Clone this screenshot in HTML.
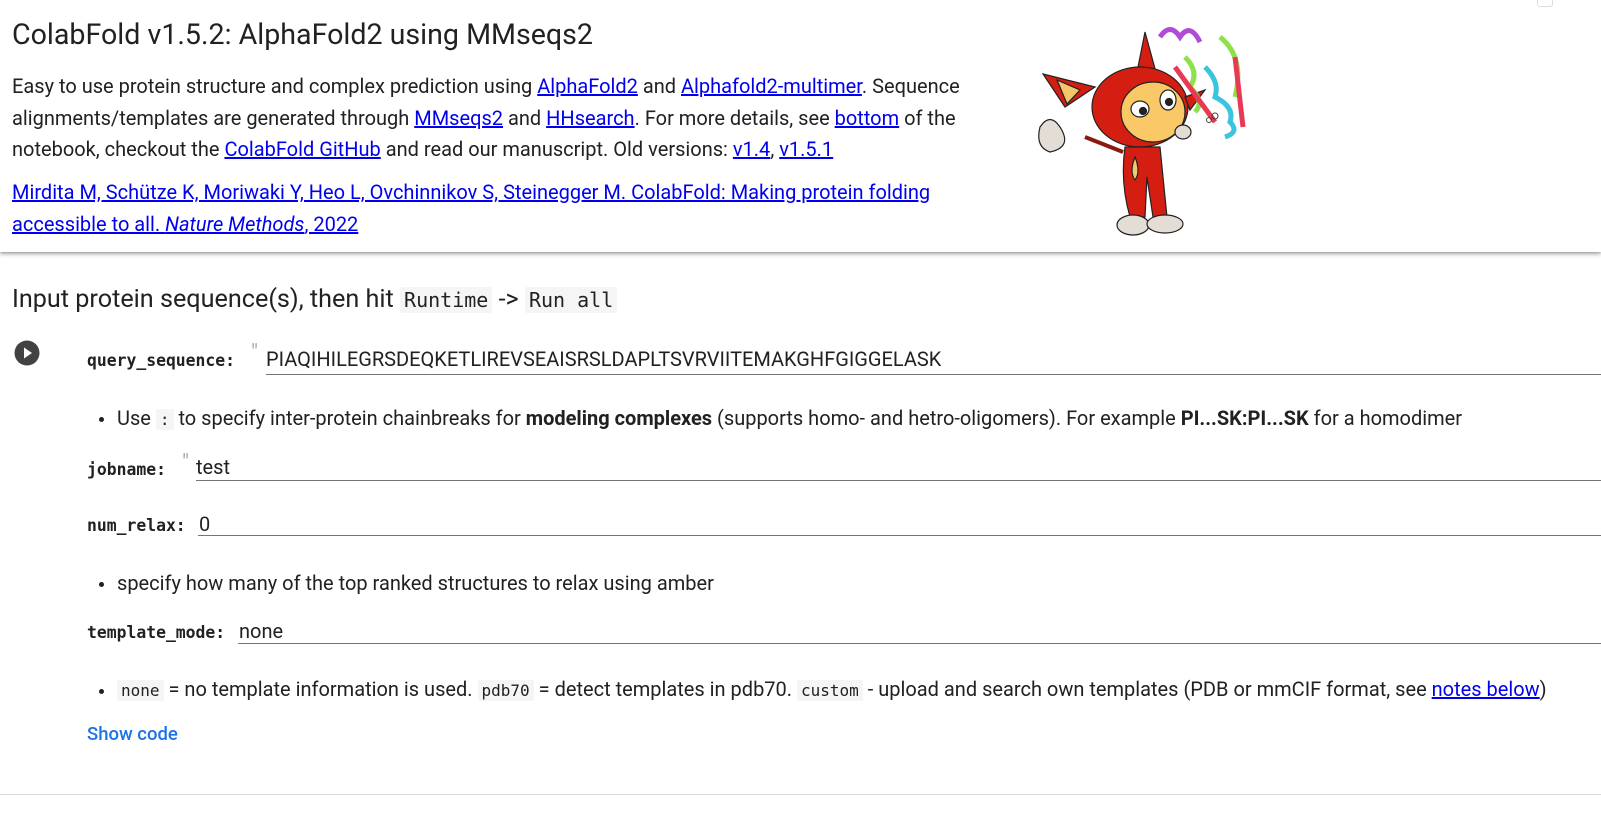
<!DOCTYPE html>
<html><head><meta charset="utf-8"><style>
*{margin:0;padding:0;box-sizing:border-box}
body{width:1601px;height:813px;background:#fff;font-family:"Roboto","Liberation Sans",sans-serif;color:#212121;position:relative;overflow:hidden}
.a{position:absolute;white-space:nowrap}
.card{position:absolute;left:0;top:0;width:1601px;height:252px;background:#fff;box-shadow:0 2px 4px rgba(0,0,0,.35),0 0 2px rgba(0,0,0,.2)}
a{color:#0000ee;text-decoration:underline}
.t{font-size:20px;line-height:31.5px}
.lbl{font-family:"DejaVu Sans Mono","Liberation Mono",monospace;font-weight:bold;font-size:16.4px;color:#212121}
.ul{position:absolute;height:1px;background:#757575;right:0}
code{font-family:"DejaVu Sans Mono","Liberation Mono",monospace;background:#f5f5f5;padding:1px 4px;font-size:16px;border-radius:2px}
.dot{position:absolute;width:5px;height:5px;border-radius:50%;background:#212121}
.q{position:absolute;color:#aaa;font-size:22px}
</style></head><body>
<div class="card">
<div class="a" style="left:12px;top:17px;font-size:28.6px;">ColabFold v1.5.2: AlphaFold2 using MMseqs2</div>
<div class="a t" style="left:12px;top:71px">Easy to use protein structure and complex prediction using <a>AlphaFold2</a> and <a>Alphafold2-multimer</a>. Sequence</div>
<div class="a t" style="left:12px;top:103px">alignments/templates are generated through <a>MMseqs2</a> and <a>HHsearch</a>. For more details, see <a>bottom</a> of the</div>
<div class="a t" style="left:12px;top:134px">notebook, checkout the <a>ColabFold GitHub</a> and read our manuscript. Old versions: <a>v1.4</a>, <a>v1.5.1</a></div>
<div class="a t" style="left:12px;top:177px"><a>Mirdita M, Schütze K, Moriwaki Y, Heo L, Ovchinnikov S, Steinegger M. ColabFold: Making protein folding</a></div>
<div class="a t" style="left:12px;top:209px"><a>accessible to all. <i>Nature Methods</i>, 2022</a></div>
<svg class="a" style="left:1035px;top:12px" width="245" height="225" viewBox="0 0 245 225">
<g stroke="#222" stroke-width="1.2">
<path d="M60 75 L8 62 L30 95 Z" fill="#d41e12"/>
<path d="M22 68 L45 78 L32 92Z" fill="#f3c86a"/>
<path d="M110 20 L100 70 L125 75Z" fill="#d41e12"/>
<ellipse cx="105" cy="95" rx="48" ry="40" fill="#d41e12"/>
<path d="M150 85 L170 78 L155 98Z" fill="#d41e12"/>
<ellipse cx="118" cy="100" rx="32" ry="30" fill="#fac866"/>
<ellipse cx="105" cy="97" rx="9" ry="8" fill="#fff"/><ellipse cx="133" cy="88" rx="8" ry="10" fill="#fff"/>
<circle cx="108" cy="99" r="3.5" fill="#222"/><circle cx="134" cy="90" r="3.5" fill="#222"/>
<path d="M90 135 Q85 170 95 205 L110 205 L112 165 L118 205 L132 205 L125 135Z" fill="#d41e12"/>
<path d="M100 145 Q106 160 100 168 Q94 160 100 145Z" fill="#f3c86a"/>
<path d="M88 140 L50 125" stroke="#8a1a10" stroke-width="4"/>
<path d="M5 115 Q15 100 25 115 Q38 135 15 140 Q0 135 5 115Z" fill="#e4ddd6"/>
<ellipse cx="98" cy="213" rx="16" ry="10" fill="#e4ddd6"/><ellipse cx="130" cy="212" rx="18" ry="9" fill="#e4ddd6"/>
<ellipse cx="148" cy="120" rx="8" ry="7" fill="#e4ddd6"/>
</g>
<g fill="none" stroke-width="5">
<path d="M125 25 Q135 10 145 25 Q155 10 165 30" stroke="#b04ad8"/>
<path d="M150 45 Q165 60 155 75 Q170 90 160 100" stroke="#8fe04a"/>
<path d="M185 25 Q210 45 200 85" stroke="#8fe04a"/>
<path d="M170 55 Q185 70 180 85 Q200 95 195 110 Q205 120 190 125" stroke="#3ac4e0"/>
<path d="M140 55 L180 110 M200 45 L208 115" stroke="#e83a55"/>
</g>
<circle cx="174" cy="108" r="2.5" fill="none" stroke="#444"/><circle cx="180" cy="104" r="3" fill="none" stroke="#444"/>
</svg>
<div class="a" style="left:1537px;top:0;width:16px;height:7px;border:1px solid #ddd;border-top:none;border-radius:0 0 3px 3px"></div>
</div>

<div class="a" style="left:12px;top:285px;font-size:25.2px">Input protein sequence(s), then hit <code style="font-size:20px">Runtime</code> -&gt; <code style="font-size:20px">Run all</code></div>

<svg class="a" style="left:14px;top:340px" width="26" height="26" viewBox="0 0 26 26"><circle cx="13" cy="13" r="12.5" fill="#424242"/><path d="M10 7.5 L18 13 L10 18.5Z" fill="#fff"/></svg>

<div class="a lbl" style="left:87px;top:351px">query_sequence:</div>
<div class="q" style="left:251px;top:341px">"</div>
<div class="a" style="left:266px;top:347px;font-size:20px">PIAQIHILEGRSDEQKETLIREVSEAISRSLDAPLTSVRVIITEMAKGHFGIGGELASK</div>
<div class="ul" style="left:266px;top:374px"></div>

<div class="dot" style="left:99px;top:417px"></div>
<div class="a" style="left:117px;top:406px;font-size:20px">Use <code>:</code> to specify inter-protein chainbreaks for <b>modeling complexes</b> (supports homo- and hetro-oligomers). For example <b>PI...SK:PI...SK</b> for a homodimer</div>

<div class="a lbl" style="left:87px;top:460px">jobname:</div>
<div class="q" style="left:182px;top:451px">"</div>
<div class="a" style="left:196px;top:455px;font-size:20px">test</div>
<div class="ul" style="left:196px;top:480px"></div>

<div class="a lbl" style="left:87px;top:516px">num_relax:</div>
<div class="a" style="left:199px;top:512px;font-size:20px">0</div>
<div class="ul" style="left:198px;top:535px"></div>

<div class="dot" style="left:99px;top:582px"></div>
<div class="a" style="left:117px;top:571px;font-size:20px">specify how many of the top ranked structures to relax using amber</div>

<div class="a lbl" style="left:87px;top:623px">template_mode:</div>
<div class="a" style="left:239px;top:619px;font-size:20px">none</div>
<div class="ul" style="left:238px;top:643px"></div>

<div class="dot" style="left:99px;top:689px"></div>
<div class="a" style="left:117px;top:677px;font-size:20px"><code>none</code> = no template information is used. <code>pdb70</code> = detect templates in pdb70. <code>custom</code> - upload and search own templates (PDB or mmCIF format, see <a>notes below</a>)</div>

<div class="a" style="left:87px;top:723px;font-size:18.5px;color:#1a73e8;font-weight:500">Show code</div>
<div class="a" style="left:0;top:794px;width:1601px;height:1px;background:#dadada"></div>
</body></html>
